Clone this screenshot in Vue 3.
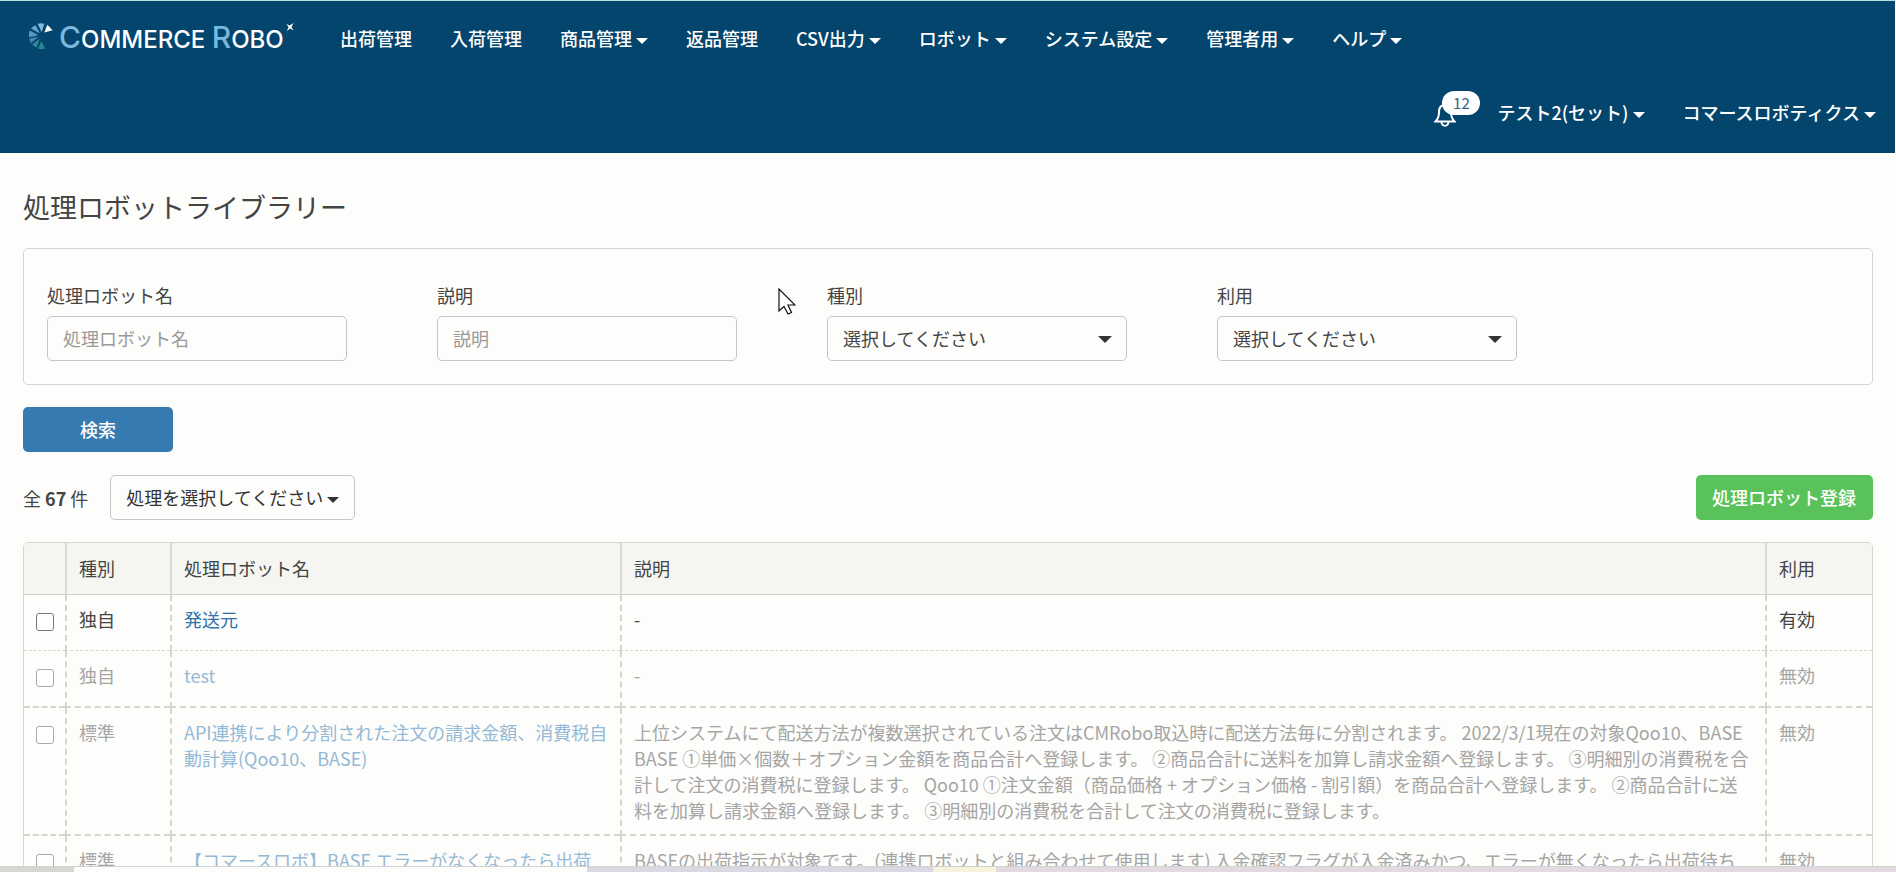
<script setup>
import { ref } from 'vue'

const navItems = [
  { label: '出荷管理' },
  { label: '入荷管理' },
  { label: '商品管理', menu: true },
  { label: '返品管理' },
  { label: 'CSV出力', menu: true },
  { label: 'ロボット', menu: true },
  { label: 'システム設定', menu: true },
  { label: '管理者用', menu: true },
  { label: 'ヘルプ', menu: true }
]

const fields = [
  { id: 'name', label: '処理ロボット名', type: 'text' },
  { id: 'description', label: '説明', type: 'text' },
  { id: 'kind', label: '種別', type: 'select' },
  { id: 'usage', label: '利用', type: 'select' }
]

const rows = ref([
  { kind: '独自', name: '発送元', description: '-', active: true, checked: false },
  { kind: '独自', name: 'test', description: '-', active: false, checked: false },
  {
    kind: '標準',
    name: 'API連携により分割された注文の請求金額、消費税自動計算(Qoo10、BASE)',
    description:
      '上位システムにて配送方法が複数選択されている注文はCMRobo取込時に配送方法毎に分割されます。 2022/3/1現在の対象Qoo10、BASE BASE ①単価×個数＋オプション金額を商品合計へ登録します。 ②商品合計に送料を加算し請求金額へ登録します。 ③明細別の消費税を合計して注文の消費税に登録します。 Qoo10 ①注文金額（商品価格 + オプション価格 - 割引額）を商品合計へ登録します。 ②商品合計に送料を加算し請求金額へ登録します。 ③明細別の消費税を合計して注文の消費税に登録します。',
    active: false,
    checked: false
  },
  {
    kind: '標準',
    name: '【コマースロボ】BASE エラーがなくなったら出荷',
    description:
      'BASEの出荷指示が対象です。(連携ロボットと組み合わせて使用します) 入金確認フラグが入金済みかつ、エラーが無くなったら出荷待ち',
    active: false,
    checked: false
  }
])
</script>

<template>
  <div class="page">
    <header class="header">
      <nav class="bar">
        <a class="logo" href="#">
          <svg class="logo-mark" viewBox="60 47 72 80" aria-hidden="true">
            <path d="M106 75 L115 52 L131 68 Z" fill="#ffffff" />
            <path d="M86 49 Q96 46 106 49 L98 74 Z" fill="#7fb8e0" />
            <path d="M66 63 Q72 55 80 53 L92 77 Z" fill="#6ba5cf" />
            <path d="M60 89 Q58 77 63 69 L88 83 Z" fill="#5b97c6" />
            <path d="M61 93 L88 88 L66 107 Q62 101 61 93 Z" fill="#3e89a8" />
            <path d="M70 110 L92 94 L83 120 Q74 117 70 110 Z" fill="#2f8b95" />
            <path d="M97 101 L108 123 Q98 127 87 123 Z" fill="#218a94" />
          </svg>
          <span class="logo-text"><b>C</b>OMMERCE <b>R</b>OBO</span>
          <svg class="logo-star" viewBox="0 0 8 8" aria-hidden="true">
            <path d="M0.5 1 L3.6 2.4 L7.5 0 L5.5 3.9 L7.5 7.4 L4.2 5.6 L0.8 8 L2.5 4.3 Z" fill="#ffffff" />
          </svg>
        </a>
        <ul class="menu">
          <li v-for="item in navItems" :key="item.label">
            <a href="#">{{ item.label }}<span v-if="item.menu" class="caret"></span></a>
          </li>
        </ul>
      </nav>
      <div class="bar bar-right">
        <button class="bell" type="button" aria-label="通知">
          <svg viewBox="0 0 22 24" fill="none" stroke="#ffffff" stroke-width="2">
            <path d="M11 2 C7 2 5 5 5 9 C5 14 4 16 1.5 18.5 H20.5 C18 16 17 14 17 9 C17 5 15 2 11 2 Z" />
            <path d="M7.5 19 C8 24 14 24 14.5 19" />
          </svg>
          <span class="badge">12</span>
        </button>
        <ul class="menu">
          <li><a href="#">テスト2(セット)<span class="caret"></span></a></li>
          <li><a href="#">コマースロボティクス<span class="caret"></span></a></li>
        </ul>
      </div>
    </header>

    <main class="content">
      <h1>処理ロボットライブラリー</h1>

      <form class="search" @submit.prevent>
        <div class="panel">
          <div v-for="field in fields" :key="field.id" class="field">
            <label :for="field.id">{{ field.label }}</label>
            <input v-if="field.type === 'text'" :id="field.id" type="text" :placeholder="field.label" />
            <div v-else class="select">
              <select :id="field.id">
                <option>選択してください</option>
              </select>
              <span class="caret"></span>
            </div>
          </div>
        </div>
        <button class="btn primary" type="submit">検索</button>
      </form>

      <div class="tools">
        <span>全 <strong>67</strong> 件</span>
        <button class="btn plain" type="button">処理を選択してください<span class="caret"></span></button>
        <button class="btn success" type="button">処理ロボット登録</button>
      </div>

      <table>
        <colgroup>
          <col class="col-check" />
          <col class="col-kind" />
          <col class="col-name" />
          <col />
          <col class="col-usage" />
        </colgroup>
        <thead>
          <tr>
            <th></th>
            <th>種別</th>
            <th>処理ロボット名</th>
            <th>説明</th>
            <th>利用</th>
          </tr>
        </thead>
        <tbody>
          <tr v-for="row in rows" :key="row.name" :class="{ inactive: !row.active }">
            <td class="check"><input v-model="row.checked" type="checkbox" :aria-label="row.name" /></td>
            <td>{{ row.kind }}</td>
            <td><a href="#">{{ row.name }}</a></td>
            <td>{{ row.description }}</td>
            <td>{{ row.active ? '有効' : '無効' }}</td>
          </tr>
        </tbody>
      </table>
    </main>

    <div class="strip" aria-hidden="true">
      <span class="seg-a"></span>
      <span class="seg-b"></span>
      <span class="seg-c"></span>
      <span class="seg-d"></span>
      <span class="seg-e"></span>
    </div>

    <svg class="pointer" viewBox="0 0 18 27" aria-hidden="true">
      <path d="M1 1 V23 L6 18.5 L10 26 L13.5 24.5 L10 17 H17 Z" fill="#ffffff" stroke="#111111" stroke-width="1.2" />
    </svg>
  </div>
</template>

<style>
body {
  margin: 0;
  background: #fdfdfb;
}
</style>

<style scoped>
* {
  box-sizing: border-box;
}

.page {
  position: relative;
  display: flex;
  flex-direction: column;
  height: 100vh;
  overflow: hidden;
  color: #444444;
  background: #fdfdfb;
  font-family: "Noto Sans CJK JP", sans-serif;
  font-size: 18px;
  line-height: 26px;
}

a {
  color: #2f72aa;
  text-decoration: none;
}

button,
input,
select {
  font: inherit;
}

.caret {
  display: inline-block;
  margin-left: 4px;
  border: 6px solid transparent;
  border-top-color: currentColor;
  border-bottom: 0;
  vertical-align: middle;
}

.header {
  flex: none;
  padding-bottom: 4px;
  border-top: 1px solid #b9dbe3;
  border-right: 1px solid #fdfdfb;
  background: #03456d;
}

.bar {
  display: flex;
  align-items: center;
  height: 74px;
  padding-left: 29px;
}

.bar-right {
  justify-content: flex-end;
}

.menu {
  display: flex;
  margin: 0;
  padding: 0;
  list-style: none;
}

.menu a {
  display: block;
  padding: 0 19px;
  color: #ffffff;
  font-weight: 500;
}

.logo {
  display: flex;
  width: 292px;
  color: #ffffff;
}

.logo-mark {
  width: 24px;
  height: 27px;
  margin-right: 6px;
}

.logo-text {
  font-family: Inter, Lato, sans-serif;
  font-size: 24px;
  font-weight: 500;
  line-height: 28px;
  white-space: nowrap;
}

.logo-text b {
  color: #7ab8de;
  font-size: 30px;
  font-weight: 500;
}

.logo-star {
  flex: none;
  width: 8px;
  height: 8px;
  margin-left: 2px;
}

.bell {
  position: relative;
  width: 44px;
  height: 24px;
  margin-top: 6px;
  padding: 0;
  border: 0;
  background: none;
}

.bell svg {
  display: block;
  width: 22px;
  height: 24px;
}

.badge {
  position: absolute;
  top: -12px;
  left: 8px;
  width: 38px;
  border-radius: 12px;
  color: #33647f;
  background: #ffffff;
  font-size: 15px;
  line-height: 24px;
  text-align: center;
}

.content {
  flex: 1;
  min-height: 0;
  padding: 34px 23px 0;
  overflow: hidden;
}

h1 {
  margin: 0 0 21px;
  font-size: 27px;
  font-weight: 400;
  line-height: 40px;
}

.panel {
  display: flex;
  gap: 90px;
  margin-bottom: 22px;
  padding: 33px 23px 23px;
  border: 1px solid #d6d6d6;
  border-radius: 5px;
}

.field {
  width: 300px;
}

.field label {
  display: block;
  margin-bottom: 8px;
}

.field input,
.field select {
  display: block;
  width: 100%;
  height: 45px;
  padding: 0 15px 2px;
  border: 1px solid #c6c6ca;
  border-radius: 5px;
  color: #444444;
  background: #fdfdfb;
  appearance: none;
}

.field input::placeholder {
  color: #999999;
}

.select {
  position: relative;
}

.select .caret {
  position: absolute;
  top: 20px;
  right: 15px;
  border-width: 7px;
  border-bottom: 0;
  color: #333333;
  pointer-events: none;
}

.btn {
  height: 45px;
  padding: 0 15px 2px;
  border: 1px solid transparent;
  border-radius: 5px;
  color: #ffffff;
  font-weight: 500;
}

.primary {
  width: 150px;
  background: #357bb2;
}

.plain {
  border-color: #c6c6ca;
  color: #333333;
  background: #fdfdfb;
  font-weight: 400;
}

.success {
  margin-left: auto;
  padding-right: 16px;
  background: #5ac25a;
}

.tools {
  display: flex;
  align-items: center;
  gap: 22px;
  margin: 23px 0 22px;
}

.tools strong {
  font-weight: 700;
}

table {
  width: 100%;
  border: 1px solid #d6d6d2;
  border-radius: 5px;
  border-spacing: 0;
  table-layout: fixed;
}

.col-check {
  width: 41px;
}

.col-kind {
  width: 105px;
}

.col-name {
  width: 450px;
}

.col-usage {
  width: 107px;
}

th {
  height: 52px;
  padding: 0 12px 2px;
  border-bottom: 1px solid #d0d0cc;
  background: #f5f5f1;
  font-weight: 400;
  text-align: left;
}

th:first-child {
  border-top-left-radius: 4px;
}

th:last-child {
  border-top-right-radius: 4px;
}

th + th {
  border-left: 2px solid #d8d8d4;
}

td {
  height: 56px;
  padding: 11px 12px;
  border-bottom: 2px dashed #d6d6ce;
  vertical-align: top;
}

tbody tr:first-child td {
  border-bottom-width: 1px;
}

td + td {
  border-left: 2px dashed #d6d6ce;
}

.inactive td {
  height: 57px;
}

.check {
  padding: 18px 0 0 12px;
}

.check input {
  display: block;
  width: 18px;
  height: 18px;
  margin: 0;
  border: 1px solid #777777;
  border-radius: 3px;
  background: #ffffff;
  appearance: none;
}

.inactive {
  color: #a5a5a5;
}

.inactive a {
  color: #94b9d6;
}

.inactive input {
  border-color: #aaaaaa;
}

.strip {
  display: flex;
  flex: none;
  height: 6px;
  border-top: 1px solid #d2d2d2;
}

.seg-a {
  width: 74px;
  background: #d6d6d2;
}

.seg-b {
  width: 513px;
  background: #fdfdfb;
}

.seg-c {
  width: 346px;
  background: #dad8e2;
}

.seg-d {
  width: 63px;
  background: #f6f2dc;
}

.seg-e {
  flex: 1;
  background: #e2dae0;
}

.pointer {
  position: absolute;
  top: 288px;
  left: 778px;
  width: 18px;
  height: 27px;
}
</style>
